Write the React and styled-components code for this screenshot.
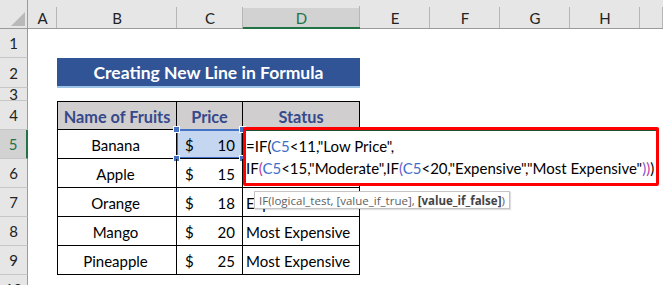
import React from "react";
import styled, { createGlobalStyle } from "styled-components";

const GlobalStyle = createGlobalStyle`
  html, body {
    margin: 0;
    padding: 0;
    background: #ffffff;
  }
  body {
    font-family: "Lato", "Open Sans", sans-serif;
  }
`;

const COLS = ["A", "B", "C", "D", "E", "F", "G", "H", ""];
const ROW_HEIGHTS = [29, 30, 13, 29, 29, 29, 29, 29, 29, 29];

// rows 5 and 6 of column D sit under the open cell editor
const fruits = [
  { name: "Banana", price: 10, status: "" },
  { name: "Apple", price: 15, status: "" },
  { name: "Orange", price: 18, status: "Expensive" },
  { name: "Mango", price: 20, status: "Most Expensive" },
  { name: "Pineapple", price: 25, status: "Most Expensive" },
];

const Sheet = styled.div`
  position: relative;
  width: 663px;
  height: 285px;
  overflow: hidden;
  display: grid;
  grid-template-columns: 28px 29px 120px 66px 117px 70px 70px 70px 70px 1fr;
  grid-template-rows: 29px ${ROW_HEIGHTS.map((h) => h + "px").join(" ")};
  background: #ffffff;
  color: #000000;
`;

const Corner = styled.div`
  grid-column: 1;
  grid-row: 1;
  background: #e6e6e6;
  border-right: 1px solid #9b9b9b;
  border-bottom: 1px solid #9b9b9b;
  box-sizing: border-box;
  display: flex;
  align-items: flex-end;
  justify-content: flex-end;
  padding: 0 2px 2px 0;
`;

const Triangle = styled.div`
  width: 0;
  height: 0;
  border-left: 14px solid transparent;
  border-bottom: 14px solid #b9b9b9;
`;

const ColHeader = styled.div`
  grid-row: 1;
  grid-column: ${(p) => p.$col};
  box-sizing: border-box;
  padding-top: 8px;
  background: linear-gradient(#b6b6b6, #b6b6b6) right bottom / 1px 21px
      no-repeat,
    ${(p) =>
      p.$active
        ? "linear-gradient(#e6e6e6, #e6e6e6) top / 100% 8px no-repeat, #d2d2d2"
        : "#e6e6e6"};
  border-bottom: ${(p) =>
    p.$active ? "2px solid #217346" : "1px solid #9b9b9b"};
  display: flex;
  align-items: center;
  justify-content: center;
  font-size: 15px;
  color: ${(p) => (p.$active ? "#217346" : "#222222")};
`;

const RowHeader = styled.div`
  grid-column: 1;
  grid-row: ${(p) => p.$row};
  box-sizing: border-box;
  background: ${(p) => (p.$active ? "#d2d2d2" : "#e6e6e6")};
  border-right: ${(p) =>
    p.$active ? "2px solid #217346" : "1px solid #9b9b9b"};
  border-bottom: 1px solid #c6c6c6;
  display: flex;
  align-items: center;
  justify-content: center;
  overflow: hidden;
  font-size: 15px;
  color: ${(p) => (p.$active ? "#217346" : "#222222")};
`;

const TitleBar = styled.div`
  grid-column: 3 / 6;
  grid-row: 3;
  box-sizing: border-box;
  background: #305496;
  border-bottom: 2px solid #9dc3e6;
  display: flex;
  align-items: center;
  justify-content: center;
  padding-top: 1px;
  color: #ffffff;
  font-weight: 700;
  font-size: 17.5px;
`;

const Cell = styled.div`
  grid-column: ${(p) => p.$col};
  grid-row: ${(p) => p.$row};
  position: relative;
  box-sizing: border-box;
  border-right: 1px solid #000000;
  border-bottom: 1px solid #000000;
  border-left: ${(p) => (p.$first ? "1px solid #000000" : "none")};
  border-top: ${(p) => (p.$top ? "1px solid #000000" : "none")};
  display: flex;
  align-items: center;
  padding: 2px 6px 0 3px;
  font-size: 15px;
  white-space: nowrap;
  justify-content: ${(p) => p.$align || "flex-start"};
`;

const HeadCell = styled(Cell)`
  background: #d0cece;
  color: #35498c;
  font-weight: 700;
  font-size: 16.3px;
  justify-content: center;
  padding: 2px 0 0 0;
`;

const PriceCell = styled(Cell)`
  justify-content: space-between;
  padding: 2px 7px 0 8px;
  background: ${(p) => (p.$ref ? "#c5d6f0" : "transparent")};
  box-shadow: ${(p) =>
    p.$ref ? "inset 0 0 0 1px #4472c4, 0 -1px 0 #4472c4" : "none"};
`;

const Handle = styled.span`
  position: absolute;
  width: 5px;
  height: 5px;
  background: #4472c4;
  border: 1px solid #ffffff;
  ${(p) => (p.$top ? "top: -4px;" : "bottom: -4px;")}
  ${(p) => (p.$left ? "left: -4px;" : "right: -4px;")}
`;

const Editor = styled.div`
  position: absolute;
  left: 243px;
  top: 127px;
  width: 416px;
  height: 59px;
  box-sizing: border-box;
  border: 3px solid #ff0000;
  border-radius: 2px;
  background: #ffffff;
  box-shadow: inset 0 1px 0 #1d4f31;
  padding: 5px 0 0 0;
  font-size: 15px;
  line-height: 22px;
  white-space: nowrap;
  color: #000000;
`;

const Ref = styled.span`
  color: #3d6fc9;
`;

const Paren = styled.span`
  color: ${(p) => p.$color};
`;

const Tooltip = styled.div`
  position: absolute;
  left: 254px;
  top: 191px;
  height: 18px;
  box-sizing: border-box;
  padding: 0 4px;
  background: #ffffff;
  border: 1px solid #c4c4c4;
  box-shadow: 1px 1px 1px rgba(0, 0, 0, 0.12);
  display: flex;
  align-items: center;
  font-family: "Open Sans", sans-serif;
  font-size: 11.5px;
  color: #5e5e5e;
  white-space: nowrap;
`;

const Strong = styled.b`
  color: #444444;
  font-weight: 700;
`;

export default function App() {
  const magenta = "#c3389c";
  const purple = "#7a5ad0";
  return (
    <>
      <GlobalStyle />
      <Sheet>
        <Corner>
          <Triangle />
        </Corner>
        {COLS.map((c, i) => (
          <ColHeader key={i} $col={i + 2} $active={c === "D"}>
            {c}
          </ColHeader>
        ))}
        {ROW_HEIGHTS.map((_, i) => (
          <RowHeader key={i} $row={i + 2} $active={i + 1 === 5}>
            {i + 1}
          </RowHeader>
        ))}

        <TitleBar>Creating New Line in Formula</TitleBar>

        <HeadCell $col={3} $row={5} $first $top>
          Name of Fruits
        </HeadCell>
        <HeadCell $col={4} $row={5} $top>
          Price
        </HeadCell>
        <HeadCell $col={5} $row={5} $top>
          Status
        </HeadCell>

        {fruits.map((f, i) => (
          <React.Fragment key={f.name}>
            <Cell $col={3} $row={i + 6} $first $align="center">
              {f.name}
            </Cell>
            <PriceCell $col={4} $row={i + 6} $ref={i === 0}>
              <span>$</span>
              <span>{f.price}</span>
              {i === 0 && (
                <>
                  <Handle $top $left />
                  <Handle $top />
                  <Handle $left />
                  <Handle />
                </>
              )}
            </PriceCell>
            <Cell $col={5} $row={i + 6}>
              {f.status}
            </Cell>
          </React.Fragment>
        ))}

        <Editor>
          <div>
            =IF(<Ref>C5</Ref>&lt;11,"Low Price",
          </div>
          <div>
            IF<Paren $color={magenta}>(</Paren>
            <Ref>C5</Ref>&lt;15,"Moderate",IF<Paren $color={purple}>(</Paren>
            <Ref>C5</Ref>&lt;20,"Expensive","Most Expensive"
            <Paren $color={purple}>)</Paren>
            <Paren $color={magenta}>)</Paren>)
          </div>
        </Editor>

        <Tooltip>
          IF(logical_test, [value_if_true],&nbsp;
          <Strong>[value_if_false]</Strong>)
        </Tooltip>
      </Sheet>
    </>
  );
}
